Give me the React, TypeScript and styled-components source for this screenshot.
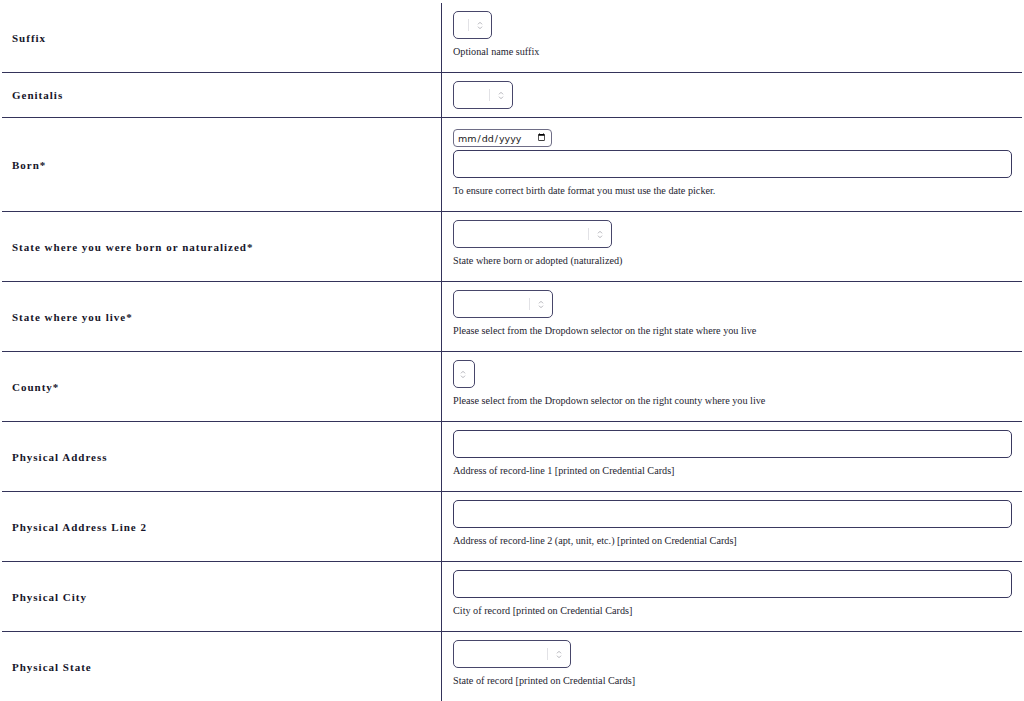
import styled, { createGlobalStyle } from 'styled-components';

type Field = {
    label: string;
    kind: 'select' | 'text' | 'date';
    width?: number;
    help?: string;
};

const fields: Field[] = [
    { label: 'Suffix', kind: 'select', width: 39, help: 'Optional name suffix' },
    { label: 'Genitalis', kind: 'select', width: 60 },
    { label: 'Born*', kind: 'date', help: 'To ensure correct birth date format you must use the date picker.' },
    { label: 'State where you were born or naturalized*', kind: 'select', width: 159, help: 'State where born or adopted (naturalized)' },
    { label: 'State where you live*', kind: 'select', width: 100, help: 'Please select from the Dropdown selector on the right state where you live' },
    { label: 'County*', kind: 'select', width: 22, help: 'Please select from the Dropdown selector on the right county where you live' },
    { label: 'Physical Address', kind: 'text', help: 'Address of record-line 1 [printed on Credential Cards]' },
    { label: 'Physical Address Line 2', kind: 'text', help: 'Address of record-line 2 (apt, unit, etc.) [printed on Credential Cards]' },
    { label: 'Physical City', kind: 'text', help: 'City of record [printed on Credential Cards]' },
    { label: 'Physical State', kind: 'select', width: 118, help: 'State of record [printed on Credential Cards]' },
];

const GlobalStyle = createGlobalStyle`
    html, body {
        margin: 0;
        padding: 0;
        background: #ffffff;
        font-family: "Liberation Serif", "DejaVu Serif", serif;
        color: #1c1b2e;
    }
`;

const Page = styled.div`
    padding: 3px 2px 0 2px;
`;

const Table = styled.div`
    display: flex;
    flex-direction: column;
`;

const Row = styled.div<{ last: boolean }>`
    display: grid;
    grid-template-columns: 440px 1fr;
    border-bottom: ${props => (props.last ? 'none' : '1px solid #34335a')};
`;

const LabelCell = styled.div`
    display: flex;
    align-items: center;
    padding: 0 10px;
    border-right: 1px solid #34335a;
    font-size: 11px;
    font-weight: 700;
    letter-spacing: 1px;
    color: #16152a;
`;

const FieldCell = styled.div`
    display: flex;
    flex-direction: column;
    align-items: flex-start;
    padding: 8px 10px 8px 11px;
`;

const SelectBox = styled.div<{ w: number }>`
    box-sizing: border-box;
    width: ${props => props.w}px;
    height: 28px;
    border: 1.5px solid #47466a;
    border-radius: 5px;
    display: flex;
    align-items: center;
    justify-content: flex-end;
    background: #fff;
`;

const Separator = styled.span`
    width: 1px;
    height: 12px;
    background: #e2e2e6;
    margin-right: 8px;
`;

const Chevrons = styled.span`
    display: flex;
    width: 6px;
    margin-right: 8px;
    color: #b4b4ba;
`;

const TextInput = styled.input`
    box-sizing: border-box;
    width: 100%;
    height: 28px;
    border: 1.5px solid #3a3960;
    border-radius: 5px;
    background: #fff;
    outline: none;
`;

const DateInput = styled.input`
    box-sizing: border-box;
    width: 99px;
    height: 18px;
    margin: 3px 0 3px;
    padding: 0 3px;
    border: 1px solid #6e6d86;
    border-radius: 4px;
    font-family: "DejaVu Sans", sans-serif;
    font-size: 9.5px;
    color: #222;
    background: #fff;
`;

const Help = styled.div`
    margin: 5px 0 4px;
    font-size: 10.2px;
    line-height: 16px;
    color: #1e1d30;
`;

const SelectControl = ({ width }: { width: number }) => (
    <SelectBox w={width}>
        {width > 30 && <Separator />}
        <Chevrons>
            <svg width="6" height="9" viewBox="0 0 6 9" fill="none" stroke="currentColor" strokeWidth="1">
                <path d="M1 3.3 L3 1.3 L5 3.3" />
                <path d="M1 5.7 L3 7.7 L5 5.7" />
            </svg>
        </Chevrons>
    </SelectBox>
);

const App = () => {
    return (
        <Page>
            <GlobalStyle />
            <Table>
                {fields.map((f, i) => (
                    <Row key={f.label} last={i === fields.length - 1}>
                        <LabelCell>{f.label}</LabelCell>
                        <FieldCell>
                            {f.kind === 'select' && <SelectControl width={f.width || 60} />}
                            {f.kind === 'date' && (
                                <>
                                    <DateInput type="date" />
                                    <TextInput type="text" />
                                </>
                            )}
                            {f.kind === 'text' && <TextInput type="text" />}
                            {f.help && <Help>{f.help}</Help>}
                        </FieldCell>
                    </Row>
                ))}
            </Table>
        </Page>
    );
};

export default App;
